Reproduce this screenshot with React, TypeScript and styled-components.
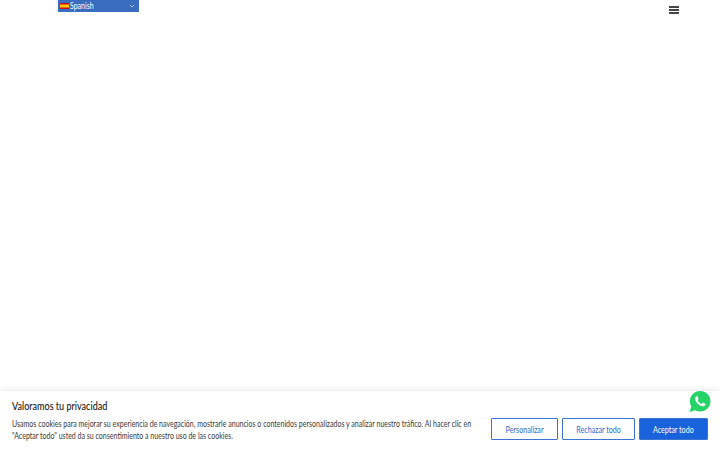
import React from "react";
import styled, { createGlobalStyle } from "styled-components";
import { IoLogoWhatsapp } from "react-icons/io";

const Global = createGlobalStyle`
  html, body { margin: 0; padding: 0; background: #fff; }
  body { font-family: "Lato", "Liberation Sans", sans-serif; overflow: hidden; }
`;

const Page = styled.div`
  height: 450px;
  display: flex;
  flex-direction: column;
  justify-content: space-between;
`;

const Header = styled.header`
  display: flex;
  justify-content: space-between;
  align-items: flex-start;
  padding: 0 41px 0 58px;
`;

const LangSelect = styled.div`
  width: 81px;
  height: 12px;
  background: #3a6cc0;
  color: #fff;
  display: flex;
  align-items: center;
  padding: 0 4px 0 2px;
  box-sizing: border-box;
  font-size: 8.5px;
  line-height: 12px;
  gap: 1px;
`;

const Flag = styled.svg`
  width: 9px;
  height: 6px;
  flex: none;
`;

const LangLabel = styled.span`
  flex: 1;
  transform: scaleX(0.82);
  transform-origin: left center;
`;

const MenuButton = styled.svg`
  width: 10px;
  height: 8px;
  margin-top: 6px;
  display: block;
`;

const Banner = styled.section`
  height: 59px;
  box-sizing: border-box;
  background: #fff;
  box-shadow: 0 -1px 6px rgba(0, 0, 0, 0.1);
  padding: 9px 12px 0 12px;
  display: flex;
  align-items: flex-start;
  justify-content: space-between;
  position: relative;
`;

const Copy = styled.div`
  width: 466px;
`;

const Title = styled.h2`
  margin: 0 0 5px;
  font-size: 10.5px;
  line-height: 13px;
  font-weight: 500;
  color: #212121;
  transform: scaleX(0.86);
  transform-origin: left center;
`;

const Body = styled.p`
  margin: 0;
  width: 555px;
  font-size: 8.5px;
  line-height: 12px;
  color: #3a3a3a;
  white-space: pre;
  transform: scaleX(0.827);
  transform-origin: left center;
`;

const Actions = styled.div`
  display: flex;
  gap: 4px;
  margin-top: 18px;
`;

const Button = styled.button<{ $primary?: boolean; $w: number }>`
  width: ${(p) => p.$w}px;
  height: 22px;
  box-sizing: border-box;
  padding: 1px 0 0;
  border: 1px solid #3c74d0;
  border-radius: 1px;
  background: ${(p) => (p.$primary ? "#1863dc" : "#fff")};
  color: ${(p) => (p.$primary ? "#fff" : "#2a6bd0")};
  font-family: inherit;
  font-size: 8.5px;
`;

const ButtonLabel = styled.span`
  display: inline-block;
  transform: scaleX(0.84);
`;

const WhatsApp = styled.a`
  position: absolute;
  left: 688px;
  top: -2px;
  width: 24px;
  height: 25px;
  color: #25d366;
  display: flex;
  align-items: center;
  justify-content: center;
  font-size: 25px;
`;

export default function App() {
  return (
    <Page>
      <Global />
      <Header>
        <LangSelect>
          <Flag viewBox="0 0 9 6">
            <rect width="9" height="6" fill="#c60b1e" />
            <rect y="1.5" width="9" height="3" fill="#ffc400" />
          </Flag>
          <LangLabel>Spanish</LangLabel>
          <svg width="6" height="4" viewBox="0 0 6 4" fill="none" stroke="#dfe7f5" strokeWidth="0.7">
            <path d="M1 1l2 2 2-2" />
          </svg>
        </LangSelect>
        <MenuButton viewBox="0 0 10 8">
          <rect width="10" height="2" fill="#444" />
          <rect y="3" width="10" height="2" fill="#444" />
          <rect y="6" width="10" height="2" fill="#444" />
        </MenuButton>
      </Header>
      <Banner>
        <Copy>
          <Title>Valoramos tu privacidad</Title>
          <Body>
            {"Usamos cookies para mejorar su experiencia de navegación, mostrarle anuncios o contenidos personalizados y analizar nuestro tráfico. Al hacer clic en\n\"Aceptar todo\" usted da su consentimiento a nuestro uso de las cookies."}
          </Body>
        </Copy>
        <Actions>
          <Button $w={67}><ButtonLabel>Personalizar</ButtonLabel></Button>
          <Button $w={73}><ButtonLabel>Rechazar todo</ButtonLabel></Button>
          <Button $w={69} $primary><ButtonLabel>Aceptar todo</ButtonLabel></Button>
        </Actions>
        <WhatsApp aria-label="WhatsApp">
          <IoLogoWhatsapp />
        </WhatsApp>
      </Banner>
    </Page>
  );
}
